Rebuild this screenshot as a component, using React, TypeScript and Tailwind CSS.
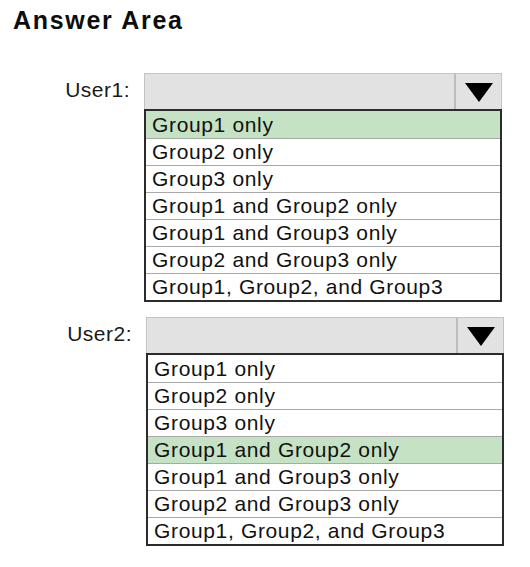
const OPTIONS = [
  "Group1 only",
  "Group2 only",
  "Group3 only",
  "Group1 and Group2 only",
  "Group1 and Group3 only",
  "Group2 and Group3 only",
  "Group1, Group2, and Group3",
]

type Pick = { label: string; selected: number; shift: string }

const PICKS: Pick[] = [
  { label: "User1:", selected: 0, shift: "ml-0" },
  { label: "User2:", selected: 3, shift: "ml-[2px]" },
]

function Arrow() {
  return (
    <svg width="28" height="19" viewBox="0 0 28 19">
      <polygon points="0,0 28,0 14,19" fill="#000" />
    </svg>
  )
}

function Dropdown({ pick }: { pick: Pick }) {
  return (
    <div className="flex items-start">
      <div className={`w-[130px] pt-[4px] text-right text-[21px] leading-[26px] tracking-[0.5px] text-[#1a1a1a] ${pick.shift}`}>
        {pick.label}
      </div>
      <div className="ml-[14px] w-[358px]">
        <div className="flex h-[36px] border border-b-0 border-[#c4c4c4] bg-[#e2e2e2]">
          <div className="flex-1" />
          <div className="flex w-[47px] items-center justify-center border-l-2 border-[#bcbcbc] pt-[2px]">
            <Arrow />
          </div>
        </div>
        <div className="border-2 border-[#2b2b2b] bg-white">
          {OPTIONS.map((o, i) => (
            <div
              key={o}
              className={`flex h-[27px] items-center pl-[6px] text-[21px] tracking-[0.65px] text-[#111] ${i > 0 ? "border-t border-[#a9a9a9]" : ""} ${i === pick.selected ? "bg-[#c5e2c4]" : ""}`}
            >
              {o}
            </div>
          ))}
        </div>
      </div>
    </div>
  )
}

export default function App() {
  return (
    <div className="h-[567px] w-[530px] bg-white pt-[5px] font-['Liberation_Sans',Arial,sans-serif]">
      <h1 className="pl-[13px] text-[25px] leading-[30px] font-bold tracking-[1.7px] text-[#0d0d0d]">Answer Area</h1>
      <div className="mt-[38px] flex flex-col gap-[15px]">
        {PICKS.map(p => (
          <Dropdown key={p.label} pick={p} />
        ))}
      </div>
    </div>
  )
}
